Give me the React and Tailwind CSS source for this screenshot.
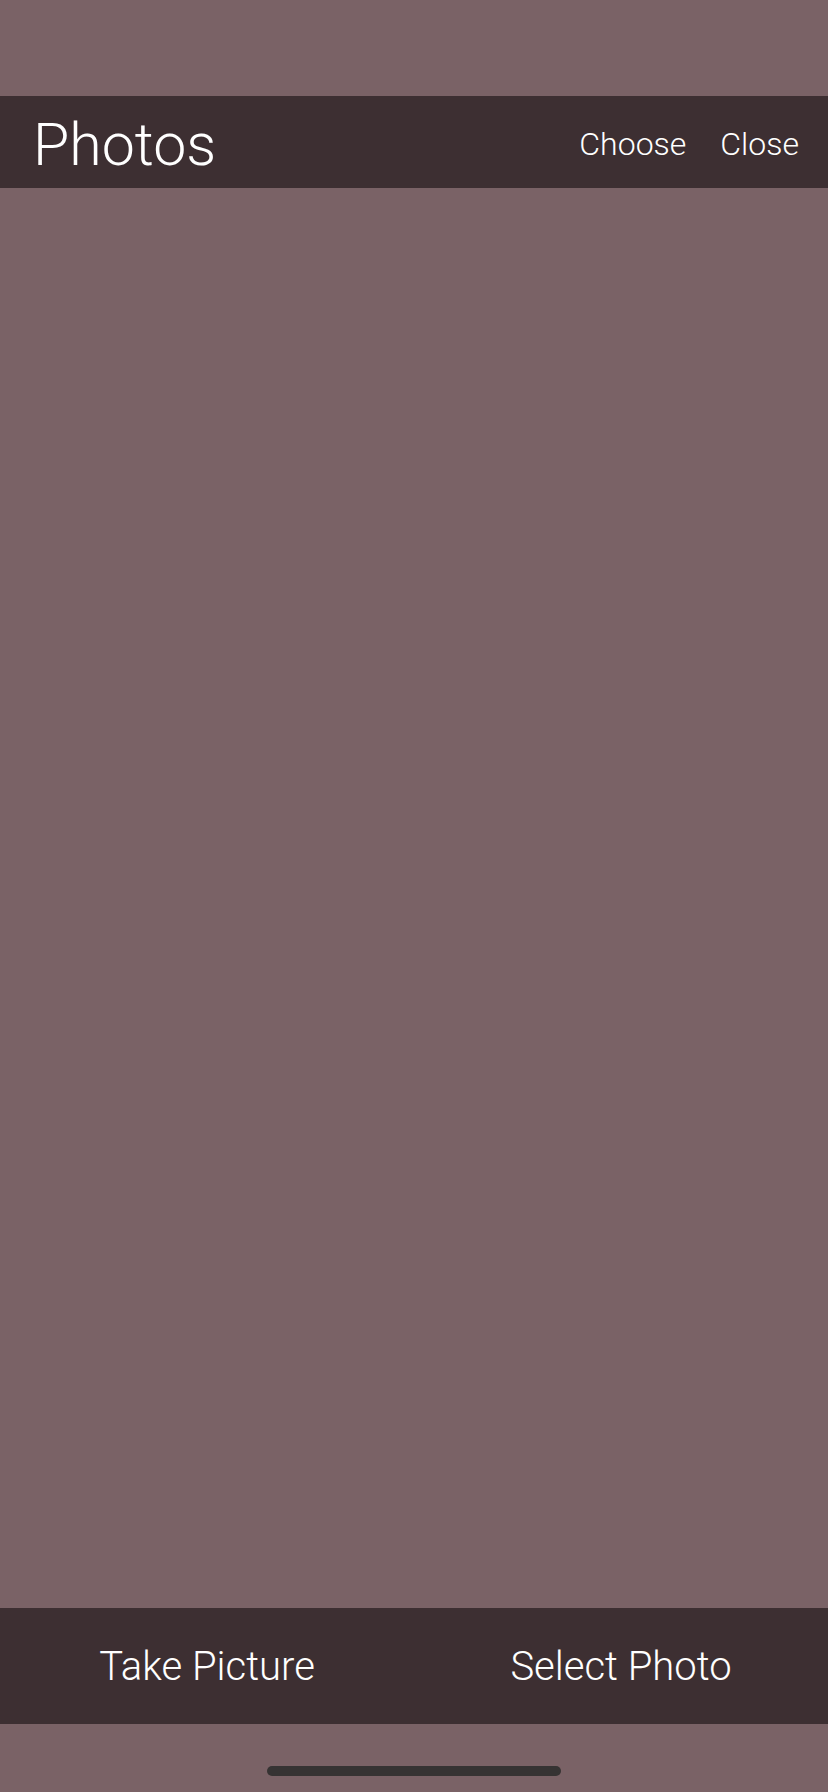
export default function App() {
  return (
    <div
      className="flex h-[1792px] w-full flex-col bg-[#7a6266] text-white"
      style={{ fontFamily: 'Roboto, "Liberation Sans", Arial, sans-serif' }}
    >
      <div className="h-[96px] shrink-0" />
      <header className="flex h-[92px] shrink-0 items-start justify-between bg-[#3d2f32] pl-[33px] pr-[29px]">
        <h1 className="pt-[19px] text-[59px] leading-none font-light">Photos</h1>
        <div className="flex gap-[34px] pt-[32px] text-[32px] leading-none font-light">
          <span>Choose</span>
          <span>Close</span>
        </div>
      </header>
      <main className="flex-1" />
      <footer className="flex h-[116px] shrink-0 bg-[#3d2f32] text-[40px] leading-none font-light">
        <div className="flex flex-1 justify-center pt-[39px]">Take Picture</div>
        <div className="flex flex-1 justify-center pt-[39px]">Select Photo</div>
      </footer>
      <div className="flex h-[68px] shrink-0 justify-center pt-[42px]">
        <div className="h-[10px] w-[294px] rounded-full bg-[#363333]" />
      </div>
    </div>
  );
}
